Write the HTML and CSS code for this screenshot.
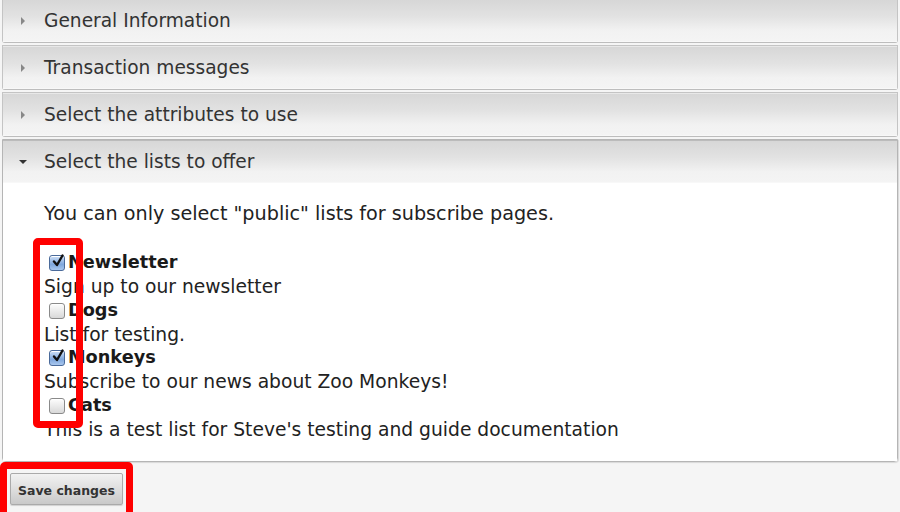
FILE: index.html
```html
<!DOCTYPE html>
<html>
<head>
<meta charset="utf-8">
<link rel="stylesheet" href="styles.css">
</head>
<body>
<div class="page">
  <div class="accordion">
    <div class="panel">
      <div class="head"><span class="tri tri-right"></span>General Information</div>
    </div>
    <div class="panel">
      <div class="head"><span class="tri tri-right"></span>Transaction messages</div>
    </div>
    <div class="panel">
      <div class="head"><span class="tri tri-right"></span>Select the attributes to use</div>
    </div>
    <div class="panel open">
      <div class="head"><span class="tri tri-down"></span>Select the lists to offer</div>
      <div class="body">
        <p class="note">You can only select "public" lists for subscribe pages.</p>
        <div class="lists">
          <div class="item">
            <label class="opt"><span class="cb checked"><svg viewBox="0 0 16 16"><path d="M4 8.5 L7 12 L12.5 2.5" fill="none" stroke="#111" stroke-width="2.4" stroke-linecap="round" stroke-linejoin="round"/></svg></span><b>Newsletter</b></label>
            <div class="desc">Sign up to our newsletter</div>
          </div>
          <div class="item">
            <label class="opt"><span class="cb"></span><b>Dogs</b></label>
            <div class="desc">List for testing.</div>
          </div>
          <div class="item">
            <label class="opt"><span class="cb checked"><svg viewBox="0 0 16 16"><path d="M4 8.5 L7 12 L12.5 2.5" fill="none" stroke="#111" stroke-width="2.4" stroke-linecap="round" stroke-linejoin="round"/></svg></span><b>Monkeys</b></label>
            <div class="desc">Subscribe to our news about Zoo Monkeys!</div>
          </div>
          <div class="item">
            <label class="opt"><span class="cb"></span><b>Cats</b></label>
            <div class="desc">This is a test list for Steve's testing and guide documentation</div>
          </div>
          <div class="mark mark-boxes"></div>
        </div>
      </div>
    </div>
  </div>
  <div class="actions">
    <button class="save">Save changes</button>
    <div class="mark mark-save"></div>
  </div>
</div>
</body>
</html>
```

FILE: styles.css
```css
html, body {
  margin: 0;
  padding: 0;
  background: #f5f5f5;
  width: 900px;
  height: 512px;
  overflow: hidden;
  font-family: "DejaVu Sans", Verdana, sans-serif;
  color: #222;
}

.page {
  padding: 0 2px 0 2px;
  margin-top: -2px;
}

.accordion {
  display: flex;
  flex-direction: column;
  gap: 2px;
}

.panel {
  border: 1px solid #c4c4c4;
  border-bottom-color: #bdbdbd;
  border-radius: 0 0 3px 3px;
}

.head {
  height: 41px;
  display: flex;
  align-items: center;
  padding-left: 41px;
  position: relative;
  font-size: 18.6px;
  color: #333;
  background: linear-gradient(#d7d7d7 0%, #e2e2e2 40%, #f2f2f2 75%, #f4f4f4 100%);
  border-top: 1px solid #e8e8e8;
  border-bottom: 1px solid #f8f8f8;
}

.tri {
  position: absolute;
  left: 18px;
  top: 50%;
  width: 0;
  height: 0;
}

.tri-right {
  margin-top: -4px;
  border-top: 4px solid transparent;
  border-bottom: 4px solid transparent;
  border-left: 4px solid #888;
}

.tri-down {
  left: 16px;
  margin-top: -2px;
  border-left: 4px solid transparent;
  border-right: 4px solid transparent;
  border-top: 4px solid #333;
}

.panel.open {
  border-color: #b5b5b5;
  border-radius: 0 0 4px 4px;
  box-shadow: 1px 1px 1px rgba(0,0,0,0.12);
}

.panel.open .head {
  border-top-color: #bbb;
}

.body {
  background: #fff;
  padding: 19px 0 19px 41px;
  font-size: 18.7px;
  color: #222;
}

.note {
  margin: 0 0 25px 0;
  line-height: 24px;
  font-size: 19.2px;
}

.lists {
  position: relative;
  line-height: 23.85px;
}

.opt {
  display: flex;
  align-items: center;
}

.opt b {
  font-weight: bold;
  font-size: 17.7px;
  color: #1a1a1a;
}

.cb {
  width: 14px;
  height: 14px;
  margin: 0 3px 0 5px;
  border: 1px solid #8a8a8a;
  border-radius: 3px;
  background: linear-gradient(#fdfdfd, #d8d8d8);
  box-shadow: inset 0 1px 0 #fff;
  position: relative;
  flex: none;
}

.cb.checked {
  border-color: #4a6a9a;
  background: linear-gradient(#cfe0f7, #7fa7dc 60%, #a9c7ee);
}

.cb svg {
  position: absolute;
  left: 0;
  top: -3px;
  width: 16px;
  height: 16px;
}

.mark {
  position: absolute;
  border: 7px solid #ff0000;
  border-radius: 5px;
  pointer-events: none;
}

.mark-boxes {
  left: -11px;
  top: -13px;
  width: 36px;
  height: 176px;
}

.actions {
  position: relative;
  padding: 11px 0 0 8px;
}

.save {
  font-family: "DejaVu Sans", Verdana, sans-serif;
  font-weight: bold;
  font-size: 12.5px;
  color: #333;
  height: 32px;
  width: 113px;
  padding: 3px 0 0 0;
  border: 1px solid #aaa;
  border-radius: 2px;
  background: linear-gradient(#f2f2f2, #dcdcdc 55%, #c9c9c9);
  box-shadow: 0 1px 1px rgba(0,0,0,0.15);
}

.mark-save {
  left: -2px;
  top: 0;
  width: 119px;
  height: 45px;
}
```
